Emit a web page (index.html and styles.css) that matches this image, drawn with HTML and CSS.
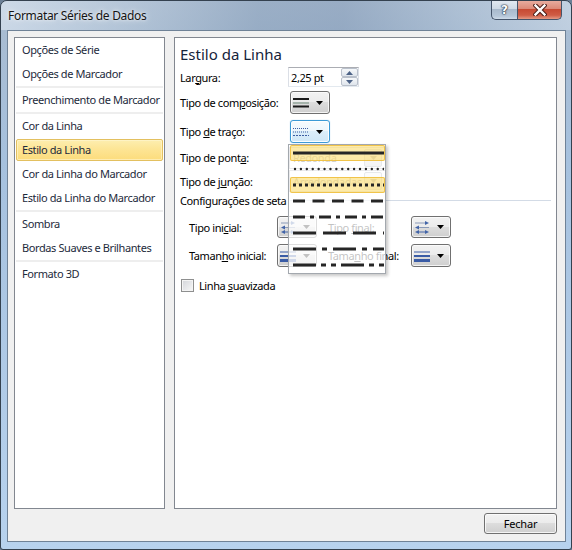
FILE: index.html
```html
<!DOCTYPE html>
<html lang="pt">
<head>
<meta charset="utf-8">
<title>Formatar Séries de Dados</title>
<link rel="stylesheet" href="styles.css">
</head>
<body>
<div class="window">
  <div class="titlebar">
    <span class="title">Formatar Séries de Dados</span>
    <div class="caption-buttons">
      <div class="cap-btn help">?</div>
      <div class="cap-btn close">
        <svg width="14" height="12" viewBox="0 0 14 12"><path d="M2.5 1.5 L11.5 10.5 M11.5 1.5 L2.5 10.5" stroke="#4a1d18" stroke-width="4.4" stroke-linecap="square"/><path d="M2.5 1.5 L11.5 10.5 M11.5 1.5 L2.5 10.5" stroke="#ffffff" stroke-width="2.4" stroke-linecap="square"/></svg>
      </div>
    </div>
  </div>
  <div class="client">
    <div class="panels">
      <ul class="nav">
        <li>Opções de Série</li>
        <li>Opções de Marcador</li>
        <li class="sep"></li>
        <li>Preenchimento de Marcador</li>
        <li class="sep"></li>
        <li>Cor da Linha</li>
        <li class="active">Estilo da Linha</li>
        <li>Cor da Linha do Marcador</li>
        <li>Estilo da Linha do Marcador</li>
        <li class="sep"></li>
        <li>Sombra</li>
        <li>Bordas Suaves e Brilhantes</li>
        <li class="sep"></li>
        <li>Formato 3D</li>
      </ul>
      <div class="content">
        <h1 class="heading">Estilo da Linha</h1>
        <div class="row r-largura">
          <span class="lbl">Lar<u>g</u>ura:</span>
          <div class="spin">
            <span class="spin-val">2,25 pt</span>
            <div class="spin-btns">
              <div class="spin-btn"><svg width="7" height="4" viewBox="0 0 7 4"><path d="M0 4 L3.5 0 L7 4 Z" fill="#4c6286"/></svg></div>
              <div class="spin-btn"><svg width="7" height="4" viewBox="0 0 7 4"><path d="M0 0 L3.5 4 L7 0 Z" fill="#4c6286"/></svg></div>
            </div>
          </div>
        </div>
        <div class="row r-comp">
          <span class="lbl">Tipo de com<u>p</u>osição:</span>
          <div class="combo">
            <svg class="ico" width="16" height="12" viewBox="0 0 16 12"><rect x="0" y="1" width="16" height="2" fill="#1a1a1a"/><rect x="0" y="5.5" width="16" height="1" fill="#6f8a7a"/><rect x="0" y="8.5" width="16" height="2" fill="#1a1a1a"/></svg>
            <svg class="arr" width="7" height="4" viewBox="0 0 7 4"><path d="M0 0 L7 0 L3.5 4 Z" fill="#000"/></svg>
          </div>
        </div>
        <div class="row r-traco">
          <span class="lbl">Tipo <u>d</u>e traço:</span>
          <div class="combo focus">
            <svg class="ico" width="16" height="12" viewBox="0 0 16 12"><line x1="0" y1="2.5" x2="16" y2="2.5" stroke="#3d5ea3" stroke-width="1" stroke-dasharray="1 1"/><line x1="0" y1="6" x2="16" y2="6" stroke="#3d5ea3" stroke-width="1" stroke-dasharray="1 1"/><line x1="0" y1="9.5" x2="16" y2="9.5" stroke="#3d5ea3" stroke-width="1" stroke-dasharray="2 1"/></svg>
            <svg class="arr" width="7" height="4" viewBox="0 0 7 4"><path d="M0 0 L7 0 L3.5 4 Z" fill="#000"/></svg>
          </div>
        </div>
        <div class="row r-ponta">
          <span class="lbl">Tipo de pont<u>a</u>:</span>
          <div class="wcombo"><span class="wtext">Redonda</span><div class="wbtn"><svg width="7" height="4" viewBox="0 0 7 4"><path d="M0 0 L7 0 L3.5 4 Z" fill="#333"/></svg></div></div>
        </div>
        <div class="row r-juncao">
          <span class="lbl">Tipo de j<u>u</u>nção:</span>
          <div class="wcombo"><span class="wtext">Arredondadas</span><div class="wbtn"><svg width="7" height="4" viewBox="0 0 7 4"><path d="M0 0 L7 0 L3.5 4 Z" fill="#333"/></svg></div></div>
        </div>
        <div class="row r-config">
          <span class="cfg">Configurações de seta</span>
          <span class="rule"></span>
        </div>
        <div class="row r-arrow r-arrow1">
          <span class="lbl2">Tipo ini<u>c</u>ial:</span>
          <div class="combo">
            <svg class="ico" width="16" height="13" viewBox="0 0 16 13"><line x1="1" y1="2" x2="13" y2="2" stroke="#8a9ab8" stroke-width="1"/><path d="M11 0 L15 2 L11 4 Z" fill="#4264a8"/><line x1="3" y1="6.5" x2="15" y2="6.5" stroke="#8a9ab8" stroke-width="1"/><path d="M5 4.5 L1 6.5 L5 8.5 Z" fill="#4264a8"/><line x1="3" y1="11" x2="13" y2="11" stroke="#4264a8" stroke-width="1"/><path d="M5 9 L1 11 L5 13 Z" fill="#4264a8"/><path d="M11 9 L15 11 L11 13 Z" fill="#4264a8"/></svg>
            <svg class="arr" width="7" height="4" viewBox="0 0 7 4"><path d="M0 0 L7 0 L3.5 4 Z" fill="#000"/></svg>
          </div>
          <span class="lbl3">Tipo <u>f</u>inal:</span>
          <div class="combo">
            <svg class="ico" width="16" height="13" viewBox="0 0 16 13"><line x1="1" y1="2" x2="13" y2="2" stroke="#8a9ab8" stroke-width="1"/><path d="M11 0 L15 2 L11 4 Z" fill="#4264a8"/><line x1="3" y1="6.5" x2="15" y2="6.5" stroke="#8a9ab8" stroke-width="1"/><path d="M5 4.5 L1 6.5 L5 8.5 Z" fill="#4264a8"/><line x1="3" y1="11" x2="13" y2="11" stroke="#4264a8" stroke-width="1"/><path d="M5 9 L1 11 L5 13 Z" fill="#4264a8"/><path d="M11 9 L15 11 L11 13 Z" fill="#4264a8"/></svg>
            <svg class="arr" width="7" height="4" viewBox="0 0 7 4"><path d="M0 0 L7 0 L3.5 4 Z" fill="#000"/></svg>
          </div>
        </div>
        <div class="row r-arrow r-arrow2">
          <span class="lbl2">Taman<u>h</u>o inicial:</span>
          <div class="combo">
            <svg class="ico" width="16" height="12" viewBox="0 0 16 12"><rect x="0" y="1.5" width="16" height="1" fill="#3a5ca6"/><rect x="0" y="5" width="16" height="2" fill="#3a5ca6"/><rect x="0" y="9" width="16" height="3" fill="#3a5ca6"/></svg>
            <svg class="arr" width="7" height="4" viewBox="0 0 7 4"><path d="M0 0 L7 0 L3.5 4 Z" fill="#000"/></svg>
          </div>
          <span class="lbl3">Tama<u>n</u>ho final:</span>
          <div class="combo">
            <svg class="ico" width="16" height="12" viewBox="0 0 16 12"><rect x="0" y="1.5" width="16" height="1" fill="#3a5ca6"/><rect x="0" y="5" width="16" height="2" fill="#3a5ca6"/><rect x="0" y="9" width="16" height="3" fill="#3a5ca6"/></svg>
            <svg class="arr" width="7" height="4" viewBox="0 0 7 4"><path d="M0 0 L7 0 L3.5 4 Z" fill="#000"/></svg>
          </div>
        </div>
        <div class="row r-check">
          <span class="checkbox"></span>
          <span class="chk-label">Linha <u>s</u>uavizada</span>
        </div>

        <div class="popup">
          <div class="dash hl"><svg width="91" height="16" viewBox="0 0 91 16"><line x1="0" y1="8" x2="91" y2="8" stroke="#262626" stroke-width="3"/></svg></div>
          <div class="dash"><svg width="91" height="16" viewBox="0 0 91 16"><line x1="2" y1="8" x2="91" y2="8" stroke="#262626" stroke-width="2.4" stroke-linecap="round" stroke-dasharray="0.01 5.9"/></svg></div>
          <div class="dash hl"><svg width="91" height="16" viewBox="0 0 91 16"><line x1="0" y1="8" x2="91" y2="8" stroke="#262626" stroke-width="3" stroke-dasharray="3 3"/></svg></div>
          <div class="dash"><svg width="91" height="16" viewBox="0 0 91 16"><line x1="0" y1="8" x2="91" y2="8" stroke="#262626" stroke-width="3" stroke-dasharray="12 7.5"/></svg></div>
          <div class="dash"><svg width="91" height="16" viewBox="0 0 91 16"><line x1="0" y1="8" x2="91" y2="8" stroke="#262626" stroke-width="3" stroke-dasharray="12 5 4 5"/></svg></div>
          <div class="dash"><svg width="91" height="16" viewBox="0 0 91 16"><line x1="0" y1="8" x2="91" y2="8" stroke="#262626" stroke-width="3" stroke-dasharray="23 7"/></svg></div>
          <div class="dash"><svg width="91" height="16" viewBox="0 0 91 16"><line x1="0" y1="8" x2="91" y2="8" stroke="#262626" stroke-width="3" stroke-dasharray="23 6 5 6"/></svg></div>
          <div class="dash"><svg width="91" height="16" viewBox="0 0 91 16"><line x1="0" y1="8" x2="91" y2="8" stroke="#262626" stroke-width="3" stroke-dasharray="23 5 5 5 5 5"/></svg></div>
        </div>
      </div>
    </div>
    <div class="footer">
      <button class="btn" type="button">Fechar</button>
    </div>
  </div>
</div>
</body>
</html>
```

FILE: styles.css
```css
* { box-sizing: border-box; }
html, body { margin: 0; padding: 0; }
body {
  width: 572px;
  height: 550px;
  overflow: hidden;
  background: #6b7f96;
  font-family: "Noto Sans", "Open Sans", sans-serif;
  font-size: 11px;
  letter-spacing: -0.4px;
  color: #000;
}
u { text-decoration: underline; text-underline-offset: 1px; }

.window {
  width: 572px;
  height: 550px;
  border: 1px solid #34414f;
  border-radius: 7px 7px 3px 3px;
  background: linear-gradient(to bottom, #b2c3d6 0px, #a8bcd2 30px, #a6c1de 160px, #b7d2ee 100%);
  display: flex;
  flex-direction: column;
  overflow: hidden;
}

.titlebar {
  height: 29px;
  flex: none;
  display: flex;
  align-items: flex-start;
  padding-left: 7px;
  background: linear-gradient(90deg, rgba(214,225,237,0.75) 0%, rgba(186,202,219,0.5) 22%, rgba(140,162,188,0.6) 45%, rgba(132,154,182,0.55) 60%, rgba(170,189,210,0.5) 80%, rgba(206,219,233,0.6) 100%);
}
.title {
  line-height: 29px;
  font-size: 12px;
  letter-spacing: -0.3px;
  color: #141414;
  text-shadow: 0 0 6px rgba(255,255,255,0.85), 0 0 3px rgba(255,255,255,0.7);
}
.caption-buttons {
  margin-left: auto;
  margin-right: 9px;
  margin-top: -1px;
  display: flex;
}
.cap-btn {
  height: 20px;
  border: 1px solid #44546a;
  border-top: none;
  display: flex;
  align-items: center;
  justify-content: center;
}
.help {
  width: 26px;
  border-right: none;
  border-radius: 0 0 0 5px;
  background: linear-gradient(#e3eaf2 0%, #cfdae6 45%, #a9bacd 50%, #b6c7d9 85%, #cfdcea 100%);
  color: #fff;
  font-family: "DejaVu Sans", sans-serif;
  font-weight: bold;
  font-size: 12px;
  letter-spacing: 0;
  text-shadow: 0 0 1px #1d2b3d, 0 0 1px #1d2b3d, 0 0 2px #1d2b3d;
}
.close {
  width: 45px;
  border-radius: 0 0 5px 0;
  background: linear-gradient(#eab0a3 0%, #dc8a79 45%, #c74a33 50%, #cf5c45 80%, #e49a85 100%);
}

.client {
  flex: 1;
  margin: 0 5px 7px 6px;
  border: 1px solid #6f8297;
  background: #f0f0f0;
  padding: 6px 8px 7px 6px;
  display: flex;
  flex-direction: column;
  gap: 4px;
}
.panels {
  display: flex;
  gap: 9px;
  height: 472px;
  flex: none;
}

.nav {
  width: 151px;
  flex: none;
  border: 1px solid #828790;
  background: #fff;
  list-style: none;
  margin: 0;
  padding: 0;
}
.nav li {
  height: 24px;
  line-height: 24px;
  padding-left: 7px;
  color: #1d2a3b;
  white-space: nowrap;
}
.nav li.sep {
  height: 2px;
  margin: 0 1px;
  padding: 0;
  background: #eeeeee;
}
.nav li.active {
  height: 22px;
  margin: 1px;
  line-height: 20px;
  padding-left: 5px;
  border: 1px solid #e3c060;
  border-radius: 2px;
  background: linear-gradient(#fdeeb0 0%, #fde595 45%, #fcdc7c 100%);
  box-shadow: inset 0 0 0 1px rgba(255,246,210,0.6);
}

.content {
  flex: 1;
  position: relative;
  border: 1px solid #828790;
  background: #fff;
  padding: 6px 5px 0 5px;
}
.heading {
  margin: 0;
  height: 20px;
  line-height: 20px;
  font-size: 15px;
  font-weight: normal;
  letter-spacing: 0;
  color: #15233a;
}
.row {
  display: flex;
  align-items: center;
  white-space: nowrap;
}
.lbl { width: 109px; flex: none; }
.r-largura { margin-top: 3px; height: 20px; }
.r-comp { margin-top: 4px; height: 23px; }
.r-traco { margin-top: 6px; height: 23px; }
.r-ponta { margin-top: 3px; height: 23px; }
.r-juncao { margin-top: 1px; height: 22px; }
.r-config { height: 16px; }
.r-arrow { padding-left: 9px; }
.r-arrow1 { margin-top: 8px; height: 22px; }
.r-arrow2 { margin-top: 6px; height: 23px; }
.r-check { margin-top: 10px; height: 16px; }
.lbl2 { width: 88px; flex: none; }
.lbl3 { width: 83px; flex: none; margin-left: 11px; }

.spin {
  margin-left: -1px;
  width: 71px;
  height: 20px;
  border: 1px solid #abadb3;
  border-left-color: #dbdfe6;
  border-right-color: #dbdfe6;
  border-bottom-color: #e3e9ef;
  display: flex;
  align-items: center;
  padding-left: 2px;
  background: #fff;
}
.spin-val { flex: 1; }
.spin-btns {
  width: 17px;
  height: 18px;
  display: flex;
  flex-direction: column;
}
.spin-btn {
  flex: 1;
  border: 1px solid #b9c0cb;
  border-radius: 2px;
  background: linear-gradient(#f6f8fa, #dfe5ec);
  display: flex;
  align-items: center;
  justify-content: center;
}

.combo {
  width: 40px;
  height: 23px;
  flex: none;
  border: 1px solid #707070;
  border-radius: 3px;
  background: linear-gradient(#f2f2f2 0%, #ebebeb 50%, #dddddd 50%, #cfcfcf 100%);
  box-shadow: inset 0 0 0 1px rgba(252,252,252,0.8);
  display: flex;
  align-items: center;
  padding-left: 2px;
}
.r-comp .combo, .r-traco .combo { margin-left: 1px; }
.r-arrow1 .combo { height: 22px; }
.combo.focus {
  border-color: #3c9ad6;
  background: linear-gradient(#f7fbfe 0%, #ecf6fc 50%, #dceefa 50%, #cfe7f7 100%);
  box-shadow: inset 0 0 0 1px rgba(255,255,255,0.9), 0 0 1px rgba(60,154,214,0.6);
}
.ico { flex: none; }
.arr { margin-left: 7px; flex: none; }

.wcombo {
  width: 97px;
  height: 22px;
  border: 1px solid #abadb3;
  background: #fff;
  display: flex;
  align-items: center;
  padding-left: 3px;
}
.wtext { flex: 1; color: #222; }
.wbtn {
  width: 18px;
  height: 18px;
  margin-right: 3px;
  border: 1px solid #9aa3ad;
  border-radius: 2px;
  background: linear-gradient(#f2f2f2 0%, #ebebeb 50%, #dddddd 50%, #cfcfcf 100%);
  display: flex;
  align-items: center;
  justify-content: center;
}

.cfg { flex: none; }
.rule {
  flex: 1;
  height: 1px;
  margin-left: 4px;
  background: #d3dbe6;
}

.checkbox {
  width: 13px;
  height: 13px;
  margin-left: 1px;
  border: 1px solid #8e8f8f;
  background: linear-gradient(135deg, #d3d5d9 0%, #e9eaec 60%, #f8f8f8 100%);
  box-shadow: inset 0 0 0 1px #f4f4f4;
  flex: none;
}
.chk-label { margin-left: 5px; }

.popup {
  position: absolute;
  left: 113px;
  top: 106px;
  width: 98px;
  border: 1px solid #a3a8ae;
  background: rgba(255,255,255,0.76);
  box-shadow: 2px 2px 3px rgba(0,0,0,0.22);
}
.dash {
  height: 16px;
  display: flex;
  align-items: center;
  padding-left: 4px;
}
.dash svg { display: block; }
.dash.hl {
  margin: 0 0 0 1px;
  padding-left: 3px;
  border-radius: 2px;
  background: rgba(251, 220, 110, 0.6);
  box-shadow: inset 0 0 0 1px rgba(238, 186, 50, 0.8);
}

.footer {
  display: flex;
  justify-content: flex-end;
}
.btn {
  width: 73px;
  height: 21px;
  padding: 0;
  border: 1px solid #707070;
  border-radius: 3px;
  background: linear-gradient(#f2f2f2 0%, #ebebeb 50%, #dddddd 50%, #cfcfcf 100%);
  box-shadow: inset 0 0 0 1px rgba(252,252,252,0.8);
  font-family: "Noto Sans", "Open Sans", sans-serif;
  font-size: 11px;
  letter-spacing: -0.2px;
  color: #000;
}
```
